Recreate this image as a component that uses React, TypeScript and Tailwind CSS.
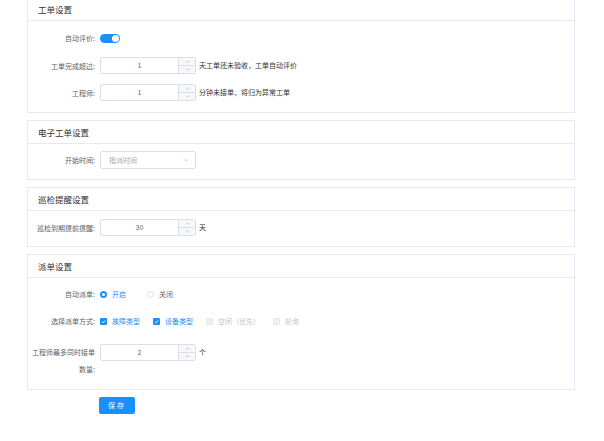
import React from "react"

const font = { fontFamily: '"Noto Sans CJK SC", "Noto Sans", sans-serif' }

/* ─── Small pieces ───────────────────────────────────────── */
function Card({ title, children, bodyClass }: { title: string; children: React.ReactNode; bodyClass: string }) {
  return (
    <div className="border border-[#e6e9ef] bg-white">
      <div className="h-[23px] flex items-center pl-[10px] border-b border-[#e6e9ef] text-[8.5px] text-[#303133]">
        {title}
      </div>
      <div className={bodyClass}>{children}</div>
    </div>
  )
}

function Label({ children }: { children: React.ReactNode }) {
  return (
    <div className="w-[72px] shrink-0 text-right pr-[5px] text-[7px] text-[#606266] leading-[10px]">
      {children}
    </div>
  )
}

function NumberInput({ value }: { value: string }) {
  return (
    <div className="w-[96px] h-[17px] border border-[#dcdfe6] rounded-[2px] flex bg-white">
      <div className="flex-1 flex items-center justify-center text-[7px] text-[#606266]">{value}</div>
      <div className="w-[17px] border-l border-[#dcdfe6] bg-[#f7f8fa] flex flex-col">
        <div className="flex-1 flex items-center justify-center border-b border-[#dcdfe6]">
          <svg width="5" height="3" viewBox="0 0 6 4" fill="none">
            <path d="M0.5 3.5L3 1L5.5 3.5" stroke="#a8abb2" strokeWidth="0.8" />
          </svg>
        </div>
        <div className="flex-1 flex items-center justify-center">
          <svg width="5" height="3" viewBox="0 0 6 4" fill="none">
            <path d="M0.5 0.5L3 3L5.5 0.5" stroke="#a8abb2" strokeWidth="0.8" />
          </svg>
        </div>
      </div>
    </div>
  )
}

function Suffix({ children }: { children: React.ReactNode }) {
  return <span className="pl-[3px] text-[7px] text-[#303133]">{children}</span>
}

function Check({ on, disabled, label }: { on?: boolean; disabled?: boolean; label: string }) {
  return (
    <div className="flex items-center gap-[5px]">
      <span
        className={
          on
            ? "w-[7px] h-[7px] rounded-[1px] bg-[#1890ff] flex items-center justify-center"
            : "w-[7px] h-[7px] rounded-[1px] bg-[#edf0f5] border border-[#e4e7ed]"
        }
      >
        {on && (
          <svg width="5" height="5" viewBox="0 0 6 6" fill="none">
            <path d="M1 3.2L2.5 4.6L5 1.6" stroke="white" strokeWidth="1" />
          </svg>
        )}
      </span>
      <span className={disabled ? "text-[7px] text-[#c0c4cc]" : "text-[7px] text-[#1890ff]"}>{label}</span>
    </div>
  )
}

/* ─── Page ───────────────────────────────────────────────── */
export default function App() {
  return (
    <div className="w-[604px] h-[441px] bg-white overflow-hidden" style={font}>
      <div className="ml-[27px] w-[548px] -mt-[3px] flex flex-col gap-[7px]">
        <Card title="工单设置" bodyClass="pt-[12px] pb-[11px] flex flex-col">
          <div className="flex items-center h-[10px]">
            <Label>自动评价:</Label>
            <div className="w-[20px] h-[9px] rounded-full bg-[#1890ff] relative">
              <span className="absolute right-[1px] top-[1px] w-[7px] h-[7px] rounded-full bg-white" />
            </div>
          </div>
          <div className="flex items-center mt-[14px]">
            <Label>工单完成超过:</Label>
            <NumberInput value="1" />
            <Suffix>天工单还未验收，工单自动评价</Suffix>
          </div>
          <div className="flex items-center mt-[10px]">
            <Label>工程师:</Label>
            <NumberInput value="1" />
            <Suffix>分钟未接单，将归为异常工单</Suffix>
          </div>
        </Card>

        <Card title="电子工单设置" bodyClass="pt-[7px] pb-[10px]">
          <div className="flex items-center">
            <Label>开始时间:</Label>
            <div className="w-[96px] h-[18px] border border-[#dcdfe6] rounded-[2px] flex items-center justify-between pl-[8px] pr-[6px]">
              <span className="text-[7px] text-[#a8abb2]">指派时间</span>
              <svg width="6" height="4" viewBox="0 0 6 4" fill="none">
                <path d="M0.5 0.8L3 3.2L5.5 0.8" stroke="#c0c4cc" strokeWidth="0.7" />
              </svg>
            </div>
          </div>
        </Card>

        <Card title="巡检提醒设置" bodyClass="pt-[8px] pb-[10px]">
          <div className="flex items-center">
            <Label>巡检到期提前提醒:</Label>
            <NumberInput value="30" />
            <Suffix>天</Suffix>
          </div>
        </Card>

        <Card title="派单设置" bodyClass="pt-[11px] pb-[11px] flex flex-col">
          <div className="flex items-center h-[10px]">
            <Label>自动派单:</Label>
            <div className="flex items-center gap-[5px]">
              <span className="w-[7px] h-[7px] rounded-full border-[2px] border-[#1890ff] bg-white" />
              <span className="text-[7px] text-[#1890ff]">开启</span>
            </div>
            <div className="flex items-center gap-[5px] ml-[21px]">
              <span className="w-[7px] h-[7px] rounded-full border border-[#dcdfe6] bg-white" />
              <span className="text-[7px] text-[#606266]">关闭</span>
            </div>
          </div>
          <div className="flex items-center h-[10px] mt-[17px]">
            <Label>选择派单方式:</Label>
            <div className="flex items-center gap-[13px]">
              <Check on label="故障类型" />
              <Check on label="设备类型" />
              <Check disabled label="空闲（优先）" />
              <Check disabled label="轮询" />
            </div>
          </div>
          <div className="flex items-start mt-[18px]">
            <div className="w-[72px] shrink-0 text-right pr-[5px] text-[7px] text-[#606266] leading-[17px]">
              工程师最多同时接单 数量:
            </div>
            <div className="flex items-center">
              <NumberInput value="2" />
              <Suffix>个</Suffix>
            </div>
          </div>
        </Card>

        <div className="flex pl-[72px]">
          <button className="w-[36px] h-[17px] rounded-[2px] bg-[#1890ff] text-white text-[7px] tracking-[2px]">
            保存
          </button>
        </div>
      </div>
    </div>
  )
}
